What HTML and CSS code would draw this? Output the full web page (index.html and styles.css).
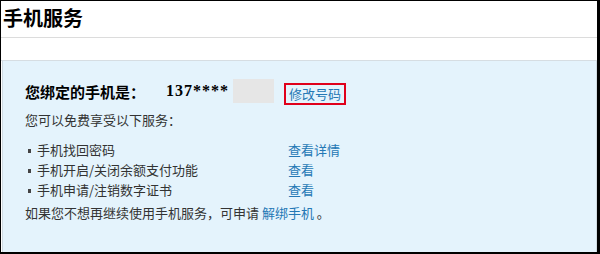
FILE: index.html
```html
<!DOCTYPE html>
<html lang="zh-CN">
<head>
  <meta charset="UTF-8">
  <title>手机服务</title>
  <link rel="stylesheet" href="styles.css">
</head>
<body>
  <div class="frame">
    <div class="head">
      <h2 class="title">手机服务</h2>
    </div>
    <div class="spacer"></div>
    <div class="panel">
      <div class="bind-row">
        <span class="bind-label">您绑定的手机是：</span>
        <span class="bind-number">137****</span>
        <span class="masked"></span>
        <a class="edit-link" href="#">修改号码</a>
      </div>
      <p class="intro">您可以免费享受以下服务：</p>
      <ul class="services">
        <li><span class="name">手机找回密码</span><a href="#">查看详情</a></li>
        <li><span class="name">手机开启/关闭余额支付功能</span><a href="#">查看</a></li>
        <li><span class="name">手机申请/注销数字证书</span><a href="#">查看</a></li>
      </ul>
      <p class="unbind">如果您不想再继续使用手机服务，可申请 <a href="#">解绑手机</a> 。</p>
    </div>
  </div>
</body>
</html>
```

FILE: styles.css
```css
body {
  margin: 0;
  font-family: "Noto Sans CJK SC", sans-serif;
  font-size: 13px;
  color: #333;
  background: #fff;
}

.frame {
  width: 600px;
  height: 254px;
  box-sizing: border-box;
  border-top: 1px solid #000;
  border-left: 1px solid #000;
  border-right: 3px solid #000;
  border-bottom: 2px solid #000;
  display: flex;
  flex-direction: column;
}

.head {
  height: 36px;
  border-bottom: 1px solid #dcdcdc;
}

.title {
  margin: 0;
  padding: 3px 0 0 2px;
  font-size: 20px;
  line-height: 28px;
  font-weight: bold;
  color: #000;
}

.spacer {
  height: 22px;
  border-bottom: 1px solid #d6dde2;
}

.panel {
  flex: 1;
  background: #e4f3fc;
  border-left: 1px solid #d0dbe2;
  border-right: 1px solid #d0dbe2;
  margin-left: 1px;
  padding: 18px 0 0 22px;
}

a {
  color: #2478b5;
  text-decoration: none;
}

.bind-row {
  display: flex;
  align-items: center;
  height: 24px;
}

.bind-label {
  font-size: 15px;
  font-weight: bold;
  color: #000;
  width: 141px;
}

.bind-number {
  font-family: "Liberation Serif", serif;
  font-size: 16px;
  font-weight: bold;
  color: #000;
  width: 67px;
  letter-spacing: 1px;
}

.masked {
  width: 41px;
  height: 24px;
  background: #e6e6e6;
}

.edit-link {
  margin-left: 10px;
  margin-top: 6px;
  border: 2px solid #e0001b;
  padding: 0 3px;
  line-height: 18px;
}

.intro {
  margin: 7px 0 0;
  line-height: 20px;
}

.services {
  list-style: none;
  margin: 10px 0 0;
  padding: 0;
}

.services li {
  display: flex;
  line-height: 20px;
}

.services .name {
  box-sizing: border-box;
  width: 263px;
  padding-left: 12px;
  position: relative;
}

.services .name::before {
  content: "";
  position: absolute;
  left: 3px;
  top: 9px;
  width: 3px;
  height: 4px;
  background: #444;
}

.unbind {
  margin: 3px 0 0;
  line-height: 20px;
}
```
